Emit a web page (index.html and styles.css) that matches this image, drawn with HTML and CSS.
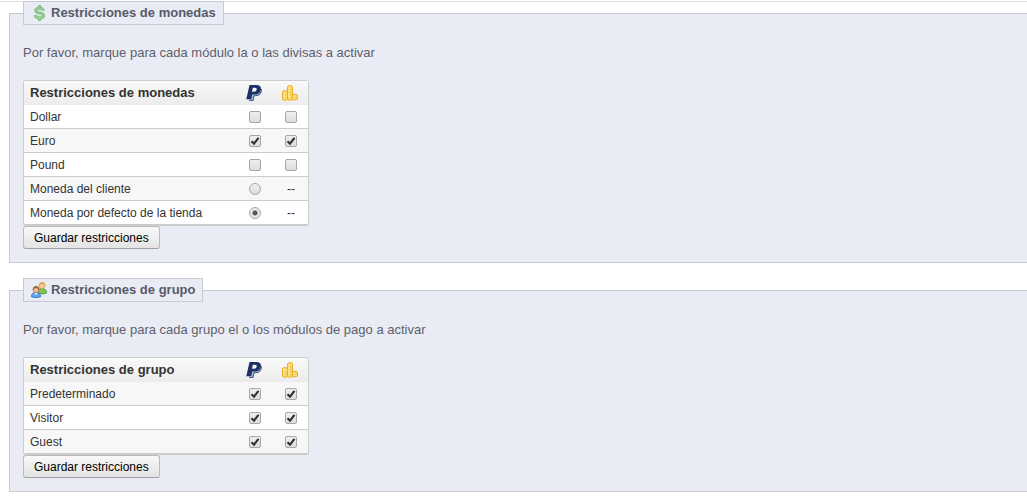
FILE: index.html
```html
<!DOCTYPE html>
<html lang="es">
<head>
<meta charset="utf-8">
<meta name="viewport" content="width=device-width, initial-scale=1">
<title>Restricciones de pago</title>
<link rel="stylesheet" href="styles.css">
</head>
<body>
<svg class="defs" aria-hidden="true">
  <symbol id="paypal" viewBox="0 0 16 16">
    <path fill="#a9b9d3" d="M5 2h8q3.500 1 2.800 4.500-1 4.300-5.500 4.500H8.500L7.500 16H3z"/>
    <path fill="none" stroke="#3d588c" d="M15.300 4q.5 6.500-6 6.700H8L7 15.500H3.500"/>
    <path fill="#1d3263" d="M3.500 0H10.500q5 0 4.300 4.700-1 4.800-6 4.800H6.200L5.200 14.200H0.300z"/>
    <path fill="#f4f5f8" d="M6.800 2.800L6 6.700h1.700q2.600 0 3-2T8.700 2.800z"/>
  </symbol>
  <symbol id="coins" viewBox="0 0 16 16">
    <g fill="#fde071" stroke="#e9ac2b">
      <path d="M5.500 2.200q0-1.600 2.500-1.600t2.500 1.600v12.300q-2.500 1.700-5 0z"/>
      <path d="M.5 7.200q0-1.600 2.500-1.600t2.500 1.600v7.300q-2.500 1.700-5 0z"/>
      <path d="M10.500 10.800q0-1.600 2.500-1.600t2.500 1.600v3.200q-2.500 2-5 0z"/>
    </g>
    <path fill="none" stroke="#eeb536" stroke-width=".8" d="M5.500 4.300q2.500 1.400 5 0M5.500 7q2.500 1.400 5 0M5.500 9.700q2.500 1.400 5 0M5.500 12.300q2.500 1.400 5 0M.5 9.500q2.500 1.400 5 0M.5 12q2.500 1.400 5 0M10.500 11.800q2.500 1.600 5 0"/>
    <path stroke="#fff6b8" stroke-width=".8" d="M7 2.500v11M2.200 7.500v6M12.200 11v3"/>
  </symbol>
</svg>
<main class="page">
  <form>
    <fieldset class="panel">
      <legend class="panel-title">
        <svg class="icon" viewBox="0 0 16 16" aria-hidden="true">
          <path fill="none" stroke="#7cb67b" stroke-width="3" d="M12.300 5.800Q12 3.300 8.500 3.300 4.800 3.300 4.800 5.500q0 1.900 3.700 2.500 4 .6 4 2.700 0 2.200-4 2.200-4 0-4.300-2.700M8.500 0v3.500M8.500 12.500v3.500"/>
          <path fill="none" stroke="#98cf96" stroke-width="1.600" d="M12.300 5.500Q12 3.300 8.500 3.300 4.800 3.300 4.800 5.500q0 1.900 3.700 2.500 4 .6 4 2.700 0 2.200-4 2.200-4 0-4.300-2.500M8.500 .6v2.700M8.500 12.700v2.700"/>
        </svg>
        Restricciones de monedas
      </legend>
      <p class="hint">Por favor, marque para cada módulo la o las divisas a activar</p>
      <table class="grid">
        <thead>
          <tr>
            <th scope="col">Restricciones de monedas</th>
            <th scope="col"><svg class="icon" role="img" aria-label="PayPal"><use href="#paypal"/></svg></th>
            <th scope="col"><svg class="icon" role="img" aria-label="Contado"><use href="#coins"/></svg></th>
          </tr>
        </thead>
        <tbody>
          <tr><td>Dollar</td><td><input type="checkbox" aria-label="Dollar, PayPal"></td><td><input type="checkbox" aria-label="Dollar, contado"></td></tr>
          <tr class="alt"><td>Euro</td><td><input type="checkbox" checked aria-label="Euro, PayPal"></td><td><input type="checkbox" checked aria-label="Euro, contado"></td></tr>
          <tr><td>Pound</td><td><input type="checkbox" aria-label="Pound, PayPal"></td><td><input type="checkbox" aria-label="Pound, contado"></td></tr>
          <tr class="alt"><td><label for="cliente">Moneda del cliente</label></td><td><input type="radio" name="moneda" id="cliente"></td><td>--</td></tr>
          <tr><td><label for="tienda">Moneda por defecto de la tienda</label></td><td><input type="radio" name="moneda" id="tienda" checked></td><td>--</td></tr>
        </tbody>
      </table>
      <button class="save" type="submit">Guardar restricciones</button>
    </fieldset>
  </form>
  <form>
    <fieldset class="panel">
      <legend class="panel-title">
        <svg class="icon" viewBox="0 0 16 16" aria-hidden="true">
          <path fill="#7fc25a" stroke="#549b43" d="M7 11q-.5-4.500 4-4.500t4.500 4.500q-4 2-8.500 0z"/>
          <circle cx="11" cy="4" r="2.800" fill="#f8cfa0" stroke="#cf9a52" stroke-width=".8"/>
          <path fill="#e2ab45" d="M7.500 4.500Q7.500 0 11 0t3.500 4.500Q13.500 2 11 2T7.500 4.500z"/>
          <path fill="#66a8ec" stroke="#3576c5" d="M.5 14.800q0-4.300 4.500-4.300t4.500 4.300q-4.500 1.400-9 0z"/>
          <path fill="#fff" d="M3.500 11h3L5 13z"/>
          <circle cx="5" cy="8" r="2.800" fill="#f5bd91" stroke="#b27750" stroke-width=".8"/>
          <path fill="#99603b" d="M1.700 8.500Q1.500 4 5 4t3.300 4.500Q7.300 6 5 6T1.700 8.500z"/>
        </svg>
        Restricciones de grupo
      </legend>
      <p class="hint">Por favor, marque para cada grupo el o los módulos de pago a activar</p>
      <table class="grid">
        <thead>
          <tr>
            <th scope="col">Restricciones de grupo</th>
            <th scope="col"><svg class="icon" role="img" aria-label="PayPal"><use href="#paypal"/></svg></th>
            <th scope="col"><svg class="icon" role="img" aria-label="Contado"><use href="#coins"/></svg></th>
          </tr>
        </thead>
        <tbody>
          <tr class="alt"><td>Predeterminado</td><td><input type="checkbox" checked aria-label="Predeterminado, PayPal"></td><td><input type="checkbox" checked aria-label="Predeterminado, contado"></td></tr>
          <tr><td>Visitor</td><td><input type="checkbox" checked aria-label="Visitor, PayPal"></td><td><input type="checkbox" checked aria-label="Visitor, contado"></td></tr>
          <tr class="alt"><td>Guest</td><td><input type="checkbox" checked aria-label="Guest, PayPal"></td><td><input type="checkbox" checked aria-label="Guest, contado"></td></tr>
        </tbody>
      </table>
      <button class="save" type="submit">Guardar restricciones</button>
    </fieldset>
  </form>
</main>
</body>
</html>
```
FILE: styles.css
```css
* {
  box-sizing: border-box;
}

body {
  margin: 0;
  background: #fff;
  color: #333;
  font: 12px/16px "Liberation Sans", Arial, sans-serif;
}

.defs {
  display: none;
}

.page {
  display: flex;
  flex-direction: column;
  gap: 15px;
  margin-top: 1px;
  padding-left: 9px;
  box-shadow: inset 0 1px 0 #e4e4e4;
}

.panel {
  min-width: 0;
  margin: 0;
  padding: 0 13px 13px;
  border: 1px solid #c8cad2;
  border-right: 0;
  background: #e9ecf4;
}

.panel-title {
  display: flex;
  align-items: center;
  gap: 4px;
  height: 24px;
  padding: 0 7px;
  border: 1px solid #c8cad2;
  background: #e9ecf4;
  color: #585a69;
  font-size: 13px;
  font-weight: bold;
}

.icon {
  display: block;
  width: 16px;
  height: 16px;
}

.hint {
  margin: 20px 0 19px;
  color: #5f606b;
  font-size: 13px;
}

.grid {
  width: 286px;
  border: 1px solid #ccc;
  border-bottom-width: 2px;
  border-radius: 3px;
  border-collapse: separate;
  border-spacing: 0;
  background: #fff;
  table-layout: fixed;
}

.grid th,
.grid td {
  height: 24px;
  padding: 0;
  text-align: center;
}

.grid th {
  background: linear-gradient(#f9f9f9, #ececec);
  font-size: 13px;
}

.grid td {
  padding-left: 2px;
}

.grid th:first-child,
.grid td:first-child {
  padding-left: 6px;
  text-align: left;
}

.grid th:not(:first-child) {
  width: 36px;
}

.grid th .icon {
  margin: 0 auto;
}

.grid tbody tr:first-child td {
  height: 23px;
}

.grid tr + tr td {
  border-top: 1px solid #ccc;
}

.alt td {
  background: #f7f7f7;
}

.grid input {
  display: block;
  appearance: none;
  width: 12px;
  height: 12px;
  margin: 0 auto;
  border: 1px solid #a6a6a6;
  border-radius: 2px;
  background: linear-gradient(#efefef, #dcdcdc);
}

.grid input[type="radio"] {
  border-radius: 50%;
}

.grid input[type="checkbox"]:checked {
  background: url("data:image/svg+xml,%3Csvg xmlns='http://www.w3.org/2000/svg' viewBox='0 0 10 10'%3E%3Cpath d='M1.500 5.200L4 7.700 8.500 1.800' fill='none' stroke='%23333' stroke-width='2.200'/%3E%3C/svg%3E") center / 10px 10px no-repeat, linear-gradient(#efefef, #dcdcdc);
}

.grid input[type="radio"]:checked {
  background: radial-gradient(circle, #555 0 2px, #e6e6e6 3px);
}

.save {
  display: block;
  height: 23px;
  padding: 0 10px;
  border: 1px solid #bbb;
  border-radius: 3px;
  border-bottom-color: #a0a0a0;
  background: linear-gradient(#f9f9f9, #e3e3e3);
  color: #000;
  font: 12px/16px "Liberation Sans", Arial, sans-serif;
}
```
